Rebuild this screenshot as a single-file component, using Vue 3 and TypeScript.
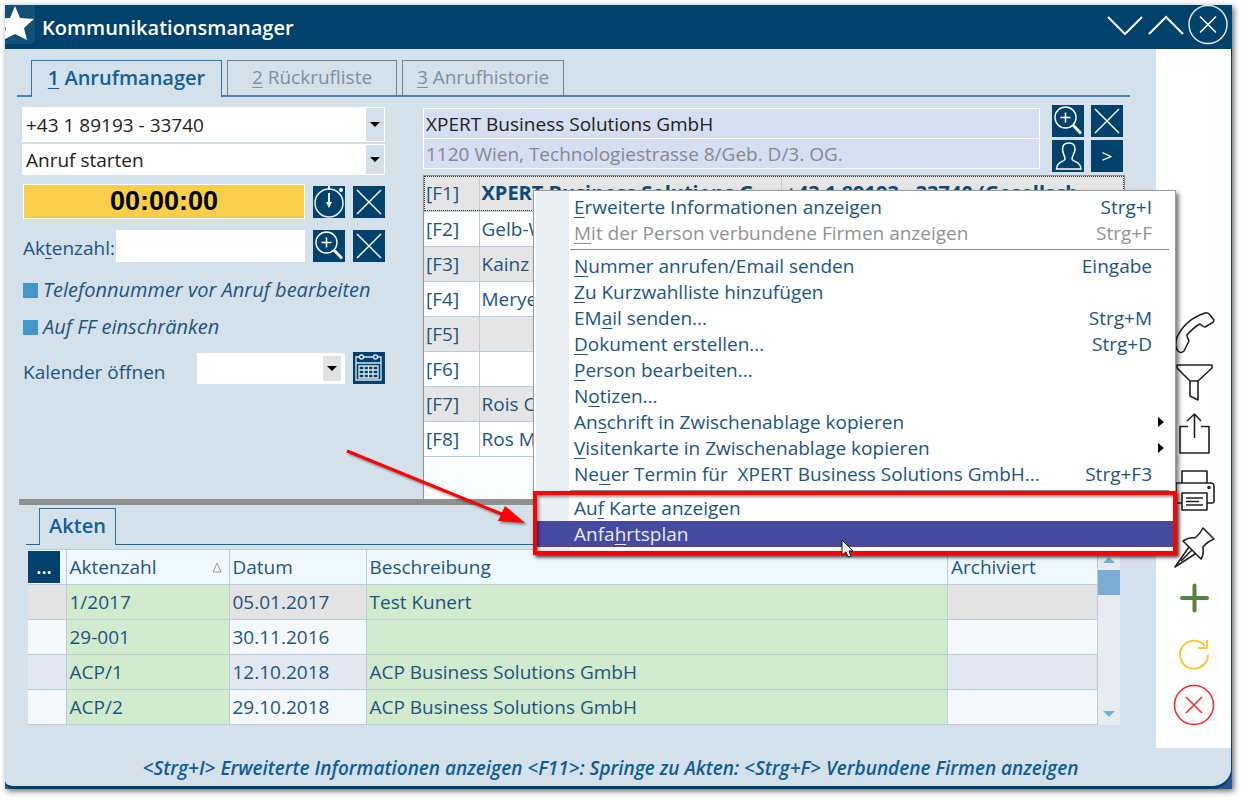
<script setup lang="ts">
import { ref } from 'vue'

interface MenuEntry {
  pre?: string
  key?: string
  post?: string
  shortcut?: string
  disabled?: boolean
  submenu?: boolean
  active?: boolean
  separator?: boolean
}

interface Contact {
  slot: string
  name: string
  phone?: string
}

const phone = ref('+43 1 89193 - 33740')
const action = ref('Anruf starten')
const company = ref('XPERT Business Solutions GmbH')
const address = ref('1120 Wien, Technologiestrasse 8/Geb. D/3. OG.')
const fileNumber = ref('')

const tabs = [
  { key: '1', label: 'Anrufmanager', size: 'active' },
  { key: '2', label: 'Rückrufliste', size: 'wide' },
  { key: '3', label: 'Anrufhistorie', size: 'narrow' },
]

const contacts: Contact[] = [
  { slot: '[F1]', name: 'XPERT Business Solutions G...', phone: '+43 1 89193 - 33740 (Gesellsch...' },
  { slot: '[F2]', name: 'Gelb-W' },
  { slot: '[F3]', name: 'Kainz' },
  { slot: '[F4]', name: 'Merye' },
  { slot: '[F5]', name: '' },
  { slot: '[F6]', name: '' },
  { slot: '[F7]', name: 'Rois C' },
  { slot: '[F8]', name: 'Ros M' },
]

const files = [
  { number: '1/2017', date: '05.01.2017', text: 'Test Kunert' },
  { number: '29-001', date: '30.11.2016', text: '' },
  { number: 'ACP/1', date: '12.10.2018', text: 'ACP Business Solutions GmbH' },
  { number: 'ACP/2', date: '29.10.2018', text: 'ACP Business Solutions GmbH' },
]

const menu: MenuEntry[] = [
  { key: 'E', post: 'rweiterte Informationen anzeigen', shortcut: 'Strg+I' },
  { key: 'M', post: 'it der Person verbundene Firmen anzeigen', shortcut: 'Strg+F', disabled: true },
  { separator: true },
  { key: 'N', post: 'ummer anrufen/Email senden', shortcut: 'Eingabe' },
  { key: 'Z', post: 'u Kurzwahlliste hinzufügen' },
  { pre: 'EM', key: 'a', post: 'il senden...', shortcut: 'Strg+M' },
  { key: 'D', post: 'okument erstellen...', shortcut: 'Strg+D' },
  { key: 'P', post: 'erson bearbeiten...' },
  { pre: 'N', key: 'o', post: 'tizen...' },
  { pre: 'An', key: 's', post: 'chrift in Zwischenablage kopieren', submenu: true },
  { key: 'V', post: 'isitenkarte in Zwischenablage kopieren', submenu: true },
  { pre: 'Ne', key: 'u', post: 'er Termin für  XPERT Business Solutions GmbH...', shortcut: 'Strg+F3' },
  { separator: true },
  { pre: 'Au', key: 'f', post: ' Karte anzeigen' },
  { pre: 'Anfa', key: 'h', post: 'rtsplan', active: true },
]
</script>

<template>
  <div class="frame">
    <div class="window">
      <header class="titlebar">
        <span class="star">
          <svg width="30" height="39" viewBox="0 0 30 39"><path d="M10 1L15 13L29 14L19 23L22 35L10 29L-2 35L1 23L-9 14L5 13Z" fill="#fff" /></svg>
        </span>
        <h1>Kommunikationsmanager</h1>
        <div class="window-buttons">
          <button aria-label="Minimieren"><svg width="38" height="40" viewBox="0 0 38 40"><path d="M2 12L19 29L36 12" fill="none" stroke="#fff" stroke-width="2" /></svg></button>
          <button aria-label="Maximieren"><svg width="38" height="40" viewBox="0 0 38 40"><path d="M2 29L19 12L36 29" fill="none" stroke="#fff" stroke-width="2" /></svg></button>
          <button aria-label="Schließen"><svg width="40" height="40" viewBox="0 0 40 40"><g fill="none" stroke="#dbe6ee" stroke-width="1.5"><circle cx="20" cy="19.500" r="19" /><path d="M12 11.500L28 27.500M28 11.500L12 27.500" stroke="#fff" /></g></svg></button>
        </div>
      </header>

      <div class="body">
        <main>
          <nav class="tabs">
            <button v-for="t in tabs" :key="t.key" class="tab" :class="t.size"><u>{{ t.key }}</u> {{ t.label }}</button>
          </nav>

          <div class="upper">
            <section class="call">
              <div class="combo tall">
                <select v-model="phone" aria-label="Telefonnummer"><option>+43 1 89193 - 33740</option></select>
                <span class="drop"></span>
              </div>
              <div class="combo">
                <select v-model="action" aria-label="Aktion"><option>Anruf starten</option></select>
                <span class="drop"></span>
              </div>
              <div class="line timer-line">
                <output class="timer">00:00:00</output>
                <button class="square" aria-label="Stoppuhr">
                  <svg width="32" height="32" viewBox="0 0 32 32"><g fill="none" stroke="#e6eef4" stroke-width="1.5"><circle cx="16" cy="17" r="14" /><path d="M16 0V4M16 7V18" stroke-width="2" /></g><path d="M13 16H19L16 22Z" fill="#fff" /><circle cx="28" cy="4" r="2" fill="#fff" /></svg>
                </button>
                <button class="square" aria-label="Zurücksetzen">
                  <svg width="32" height="32" viewBox="0 0 32 32"><path d="M4 4L28 28M28 4L4 28" stroke="#fff" stroke-width="1.4" /></svg>
                </button>
              </div>
              <div class="line">
                <label for="file-number">Ak<u>t</u>enzahl:</label>
                <input id="file-number" v-model="fileNumber" class="field" type="text" />
                <button class="square" aria-label="Akte suchen">
                  <svg width="32" height="32" viewBox="0 0 32 32"><g fill="none" stroke="#fff"><circle cx="13.500" cy="12.500" r="10.500" stroke-width="1.400" /><path d="M13.500 7.500V17.500M8.500 12.500H18.500" stroke-width="1.500" /><path d="M21 20L29 28.500" stroke-width="2.800" /></g></svg>
                </button>
                <button class="square" aria-label="Akte leeren">
                  <svg width="32" height="32" viewBox="0 0 32 32"><path d="M4 4L28 28M28 4L4 28" stroke="#fff" stroke-width="1.4" /></svg>
                </button>
              </div>
              <label class="check"><input type="checkbox" /> Telefonnummer vor Anruf bearbeiten</label>
              <label class="check"><input type="checkbox" /> Auf FF einschränken</label>
              <div class="line calendar-line">
                <label for="calendar">Kalender öffnen</label>
                <div class="combo small">
                  <select id="calendar"><option></option></select>
                  <span class="drop"></span>
                </div>
                <button class="square" aria-label="Kalender">
                  <svg width="32" height="32" viewBox="0 0 32 32"><g fill="none" stroke="#dce8f0" stroke-width="1.300"><path d="M6 5H3V28H28V5H25M11 5H20M3 11H28" /><circle cx="8.500" cy="5" r="2" /><circle cx="22.500" cy="5" r="2" /><path d="M6 14H25V26H6ZM6 18H25M6 22H25M11 14V26M15.500 14V26M20 14V26" /></g></svg>
                </button>
              </div>
            </section>

            <section class="person">
              <div class="person-head">
                <div class="person-fields">
                  <input v-model="company" type="text" aria-label="Firma" />
                  <input v-model="address" class="muted" type="text" aria-label="Adresse" />
                </div>
                <div class="person-buttons">
                  <button class="square" aria-label="Person suchen">
                    <svg width="32" height="32" viewBox="0 0 32 32"><g fill="none" stroke="#fff"><circle cx="13.500" cy="12.500" r="10.500" stroke-width="1.400" /><path d="M13.500 7.500V17.500M8.500 12.500H18.500" stroke-width="1.500" /><path d="M21 20L29 28.500" stroke-width="2.800" /></g></svg>
                  </button>
                  <button class="square" aria-label="Person leeren">
                    <svg width="32" height="32" viewBox="0 0 32 32"><path d="M4 4L28 28M28 4L4 28" stroke="#fff" stroke-width="1.4" /></svg>
                  </button>
                  <button class="square" aria-label="Person öffnen">
                    <svg width="32" height="32" viewBox="0 0 32 32"><path d="M13 19C13 16 10.500 13 10.500 9C10.500 5 13 3 17 3C21 3 23 5 23 9C23 13 20 16 20 19C20 22 29 21 29 29H4.500C4.500 21 13 22 13 19Z" fill="none" stroke="#fff" stroke-width="1.500" /></svg>
                  </button>
                  <button class="square" aria-label="Weiter">&gt;</button>
                </div>
              </div>
              <div class="contacts">
                <table>
                  <colgroup><col class="slot" /><col class="name" /><col /></colgroup>
                  <tbody>
                    <tr v-for="c in contacts" :key="c.slot">
                      <td>{{ c.slot }}</td>
                      <td>{{ c.name }}</td>
                      <td>{{ c.phone }}</td>
                    </tr>
                  </tbody>
                </table>
              </div>
            </section>
          </div>

          <div class="splitter"></div>

          <nav class="tabs lower-tabs"><button class="tab active">Akten</button></nav>
          <div class="files">
            <table>
              <colgroup><col class="c-more" /><col class="c-number" /><col class="c-date" /><col /><col class="c-archive" /></colgroup>
              <thead>
                <tr>
                  <th><button class="square more">...</button></th>
                  <th><span class="sortable">Aktenzahl <svg width="10" height="11" viewBox="0 0 10 11"><path d="M5 1L9 10H1Z" fill="none" stroke="#999" /></svg></span></th>
                  <th>Datum</th>
                  <th>Beschreibung</th>
                  <th>Archiviert</th>
                </tr>
              </thead>
              <tbody>
                <tr v-for="f in files" :key="f.number">
                  <td></td>
                  <td class="green">{{ f.number }}</td>
                  <td>{{ f.date }}</td>
                  <td class="green">{{ f.text }}</td>
                  <td></td>
                </tr>
              </tbody>
            </table>
            <div class="scrollbar">
              <svg width="12" height="6" viewBox="0 0 12 6"><path d="M6 0L12 6H0Z" fill="#7bacd1" /></svg>
              <span class="thumb"></span>
              <svg class="down" width="12" height="6" viewBox="0 0 12 6"><path d="M0 0H12L6 6Z" fill="#7bacd1" /></svg>
            </div>
          </div>
        </main>

        <aside>
          <button aria-label="Anrufen"><svg viewBox="0 0 40 40"><path d="M31-1Q34-2 36 1L40 6Q40 8 38 9L31 13Q29 13 26 10Q20 13 13 21Q13 23 15 27L10 37Q7 40 4 37Q0 32 3 23Q12 5 31-1Z" /></svg></button>
          <button aria-label="Filtern"><svg viewBox="0 0 40 40"><path d="M3 1H38V4L24 17V36L16 32V17L3 4ZM16 17H24" /></svg></button>
          <button aria-label="Teilen"><svg viewBox="0 0 40 40"><path d="M14 12.500H6V39H35V12.500H27M20.500 24V0M13 7L20.500 0L27 7" /></svg></button>
          <button class="apart" aria-label="Drucken"><svg viewBox="0 0 40 40"><path d="M8 12V0H33V12M8 32H2V12H37Q40 12 40 15V30Q40 32 38 32H33M8 22H33V39H8ZM12 27H29M12 30.500H25M12 34H29" /><circle cx="35" cy="16.500" r="1" fill="#222" /></svg></button>
          <button class="apart" aria-label="Anheften"><svg viewBox="0 0 40 40"><path d="M29 0L40 11Q33 14 29 19Q30 27 27 31L9 13Q15 9 21 10Q26 6 29 0ZM15 19L1 39L21 26M18 22L7 33" /></svg></button>
          <button aria-label="Neu"><svg viewBox="0 0 40 40"><path d="M8 20H33M20.500 7.500V32.500" class="plus" /></svg></button>
          <button class="apart" aria-label="Aktualisieren"><svg viewBox="0 0 40 40"><path d="M34 20A14 14 0 1 1 31 11M33 5V13H24" class="refresh" /></svg></button>
          <button aria-label="Abbrechen"><svg viewBox="0 0 40 40"><g class="cancel"><circle cx="20" cy="20" r="19.500" /><path d="M12 12L28 28M28 12L12 28" /></g></svg></button>
        </aside>
      </div>

      <footer>&lt;Strg+I&gt; Erweiterte Informationen anzeigen &lt;F11&gt;: Springe zu Akten: &lt;Strg+F&gt; Verbundene Firmen anzeigen</footer>
    </div>

    <div class="context-menu" role="menu">
      <template v-for="(m, i) in menu" :key="i">
        <hr v-if="m.separator" />
        <button v-else role="menuitem" :disabled="m.disabled" :class="{ chosen: m.active }">
          <span class="caption">{{ m.pre }}<u>{{ m.key }}</u>{{ m.post }}</span>
          <span v-if="m.shortcut">{{ m.shortcut }}</span>
          <svg v-if="m.submenu" class="sub" width="6" height="10" viewBox="0 0 6 10"><path d="M0 0L6 5L0 10Z" fill="#000" /></svg>
        </button>
      </template>
    </div>
    <div class="highlight"></div>
    <svg class="arrow" width="190" height="90" viewBox="0 0 190 90">
      <path d="M7 6L164 70" stroke="#f00" stroke-width="3" />
      <path d="M165 61L185 78L158 76Z" fill="#f00" />
    </svg>
    <svg class="cursor" width="14" height="20" viewBox="0 0 14 20"><path d="M1 1V16L5 13L7 18L10 17L8 12H12Z" fill="#fff" stroke="#111" /></svg>
  </div>
</template>

<style>
body { background: #fff; }
</style>

<style scoped>
* { box-sizing: border-box; }
.frame {
  position: relative;
  margin: 5px 9px 9px 5px;
  background: #2b5799;
  box-shadow: 2px 2px 6px rgba(0, 0, 0, 0.6);
  font: 19px/26px "Open Sans", "Noto Sans", sans-serif;
  color: #1d5580;
}
button, input, select { font: inherit; color: inherit; border: 0; padding: 0; margin: 0; background: none; border-radius: 0; }
u { text-decoration-thickness: 1px; text-underline-offset: 3px; }
svg { display: block; overflow: visible; }
.window {
  background: #d4e0ea;
  border-right: 1px solid #00426b;
  border-bottom: 3px solid #00426b;
  border-radius: 0 0 20px 8px;
}
.titlebar { display: flex; align-items: center; height: 44px; background: #00426b; color: #fff; }
.star { align-self: flex-start; width: 30px; height: 39px; background: #125079; border-radius: 0 0 5px 0; overflow: hidden; }
h1 { flex: 1; margin: 2px 0 0 7px; font-size: 20px; line-height: 28px; font-weight: 600; }
.window-buttons { display: flex; gap: 3px; align-self: flex-start; margin-right: 3px; }

.body { display: flex; }
main { flex: 1; min-width: 0; padding: 11px 26px 0 12px; }
.tabs { display: flex; gap: 5px; height: 37px; padding-left: 14px; border-bottom: 2px solid #4683ad; }
.tab { height: 35px; padding: 0 0 3px; border: 1px solid #6f8796; border-bottom: 0; color: #80919e; }
.tab.wide { width: 170px; }
.tab.narrow { width: 162px; }
.tab.active { width: 191px; height: 37px; border-color: #2d75a3; background: #d4e0ea; font-size: 20px; font-weight: 600; color: #116099; }

.upper { display: flex; gap: 38px; padding: 8px 5px 0 5px; }
.call { width: 363px; }
.combo { position: relative; display: flex; height: 31px; margin-bottom: 9px; background: #fff; }
.combo.tall { height: 35px; margin: 2px 0; }
.combo select { flex: 1; min-width: 0; padding-left: 4px; appearance: none; color: #222; }
.drop { position: absolute; right: 1px; top: 1px; bottom: 1px; width: 18px; background: #d4e0ea; display: grid; place-items: center; pointer-events: none; }
.drop::after { content: ""; border: 5px solid transparent; border-top-color: #000; border-bottom: 0; }
.line { display: flex; align-items: center; gap: 8px; margin-bottom: 15px; }
.timer-line { margin-bottom: 11px; }
.line label { margin-top: 4px; }
.timer { flex: 1; height: 35px; margin-left: 1px; border: 1px solid #fff; background: #f8cf4b; color: #000; font: bold 27px/33px "Liberation Sans", Arial, sans-serif; text-align: center; }
.square { display: grid; place-items: center; flex: none; width: 32px; height: 32px; background: #00426b; color: #fff; }
.call label { padding-left: 1px; }
.field { flex: 1; min-width: 0; height: 32px; background: #fff; }
.line .field { margin-left: -7px; }
.call .check { display: flex; align-items: center; gap: 5px; height: 26px; margin-bottom: 11px; font-size: 20px; font-style: italic; }
.check input { appearance: none; width: 15px; height: 15px; background: #4595c7; }
.calendar-line { margin-bottom: 0; }
.calendar-line label { flex: 1; margin-top: 8px; }
.combo.small { width: 148px; margin: 0; }
.small .drop { right: 4px; top: 3px; bottom: 3px; background: #e1e1e1; }

.person { flex: 1; min-width: 0; display: flex; flex-direction: column; gap: 3px; }
.person-head { display: flex; gap: 12px; align-items: center; padding-right: 2px; }
.person-fields { flex: 1; display: grid; gap: 1px; padding: 1px; background: #fff; }
.person-fields input { width: 100%; height: 29px; padding-left: 2px; background: #d6def1; color: #222; }
.person-fields .muted { color: #858a90; }
.person-buttons { display: grid; grid-template-columns: 32px 32px; gap: 3px 7px; }
.contacts { height: 324px; border: 1px solid #909090; border-bottom: 0; background: #fbfcfe; }
table { width: 100%; table-layout: fixed; border-collapse: collapse; }
td, th { height: 35px; padding: 0 3px; overflow: hidden; white-space: nowrap; text-align: left; font-weight: 400; line-height: 26px; border: 1px solid #b9ccda; }
.contacts td { border-width: 0 1px 1px 0; background: #fff; padding: 0 2px; }
.contacts td:last-child { border-right: 0; padding-left: 4px; }
.contacts tr:nth-child(odd) td { background: #e5e5e5; }
.contacts tr:first-child { outline: 1px dotted #333; outline-offset: -1px; }
.contacts tr:first-child td:not(:first-child) { font-size: 20px; font-weight: 700; color: #0e4b77; }
.slot { width: 55px; }
.name { width: 302px; }

.splitter { height: 6px; margin: 0 0 3px 2px; background: #909090; }
.lower-tabs { margin: 0 0 4px 9px; padding-left: 13px; border-bottom-width: 1px; border-color: #1f6796; }
.lower-tabs .tab.active { width: 77px; }
.files { display: flex; margin: 0 10px 23px 11px; }
.files table { flex: 1; width: auto; }
th { background: #f0f8ff; }
.files th:first-child, .files td:first-child { padding: 0; border-left: 0; }
.files td { background: #f4f8fb; }
.files tr:nth-child(odd) td { background: #e1e8ef; }
.files tr:first-child td { background: #e3e3e3; }
.files tr td.green { background: #d2eacd; }
.c-more { width: 38px; }
.c-number { width: 163px; }
.c-date { width: 137px; }
.c-archive { width: 150px; }
.sortable { display: flex; justify-content: space-between; align-items: center; padding-right: 4px; }
.more { font-weight: 600; line-height: 20px; }
.scrollbar { display: flex; flex-direction: column; align-items: center; width: 22px; padding: 8px 0; background: #e8ecf1; }
.thumb { width: 22px; height: 25px; margin-top: 7px; background: #7bacd1; }
.down { margin-top: auto; }

aside { display: flex; flex-direction: column; justify-content: flex-end; align-items: center; gap: 10px; width: 75px; padding: 0 0 23px 1px; background: #fff; }
aside button { width: 40px; height: 40px; }
aside .apart { margin-top: 7px; }
aside svg { width: 40px; height: 40px; fill: none; stroke: #222; stroke-width: 1.6; stroke-linejoin: round; }
aside .plus { stroke: #58803f; stroke-width: 4; stroke-linecap: round; }
aside .refresh { stroke: #fac93c; stroke-width: 2; }
aside .cancel { stroke: #f52c2c; }
footer { height: 38px; padding: 7px 15px 0 0; text-align: center; white-space: nowrap; font-size: 19px; font-style: italic; font-weight: 600; color: #0f5d94; }

.context-menu { position: absolute; left: 528px; top: 185px; width: 643px; padding: 3px 2px 6px; border: 1px solid #9a9a9a; background: linear-gradient(to right, #fff 2px, #e9eef2 2px, #e9eef2 35px, #fff 35px); box-shadow: 3px 3px 4px rgba(0, 0, 0, 0.5); }
.context-menu button { display: flex; align-items: center; width: 100%; height: 26px; padding: 0 21px 0 38px; }
.context-menu button:disabled { color: #929292; }
.context-menu .chosen { background: #454a9f; color: #e6e8f6; }
.caption { flex: 1; text-align: left; white-space: pre; }
.sub { margin-right: -12px; }
hr { margin: 3px 4px 3px 34px; border: 0; border-top: 1px solid #8b8b8b; }
hr ~ hr { margin-bottom: 4px; }
.highlight { position: absolute; left: 528px; top: 486px; width: 644px; height: 64px; border: 4px solid #f00; box-shadow: 2px 2px 3px rgba(0, 0, 0, 0.5), inset 2px 2px 3px rgba(0, 0, 0, 0.4); }
.arrow { position: absolute; left: 335px; top: 440px; filter: drop-shadow(2px 2px 1px rgba(0, 0, 0, 0.4)); }
.cursor { position: absolute; left: 836px; top: 534px; }
</style>
